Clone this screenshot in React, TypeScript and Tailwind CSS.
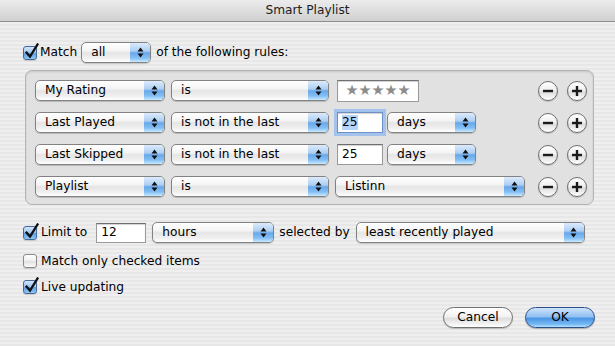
import React from "react";

const Arrows = () => (
  <svg width="7" height="11" viewBox="0 0 7 11">
    <polygon points="3.5,0.5 6.5,4.5 0.5,4.5" fill="#111" />
    <polygon points="0.5,6.5 6.5,6.5 3.5,10.5" fill="#111" />
  </svg>
);

function Popup({ label, className }: { label: string; className: string }) {
  return (
    <div
      className={`flex h-[21px] shrink-0 items-stretch overflow-hidden rounded-[5px] border border-[#828282] bg-[linear-gradient(180deg,#ffffff_0%,#f4f4f4_40%,#e5e5e5_52%,#efefef_78%,#ffffff_100%)] shadow-[0_1px_1px_rgba(0,0,0,0.18)] ${className}`}
    >
      <span className="flex flex-1 items-center truncate pl-[9px] leading-none">{label}</span>
      <span className="flex w-[20px] items-center justify-center bg-[linear-gradient(180deg,#dcebfb_0%,#aecff3_42%,#6aa7eb_52%,#82bdf3_78%,#c8eaff_100%)]">
        <Arrows />
      </span>
    </div>
  );
}

function Field({
  value,
  className,
  focused,
}: {
  value: string;
  className: string;
  focused?: boolean;
}) {
  return (
    <div
      className={`flex shrink-0 items-center border bg-white pl-[4px] shadow-[inset_0_1px_1px_rgba(0,0,0,0.18)] ${
        focused
          ? "border-[#6d92c8] ring-[3px] ring-[#a3c3ec]"
          : "border-[#9a9a9a] border-t-[#6f6f6f]"
      } ${className}`}
    >
      {focused ? <span className="bg-[#b4d4fc] leading-[15px]">{value}</span> : value}
    </div>
  );
}

function Checkbox({ checked }: { checked?: boolean }) {
  return (
    <div className="relative h-[14px] w-[14px] shrink-0">
      <div
        className={`h-[14px] w-[14px] rounded-[3px] border shadow-[0_1px_1px_rgba(0,0,0,0.15)] ${
          checked
            ? "border-[#46699c] bg-[linear-gradient(180deg,#d3e6fb_0%,#9fc6f1_45%,#5e9fe9_55%,#8ec8f5_100%)]"
            : "border-[#8a8a8a] bg-[linear-gradient(180deg,#ffffff_0%,#f1f1f1_45%,#e1e1e1_55%,#fbfbfb_100%)]"
        }`}
      />
      {checked && (
        <svg
          className="absolute -top-[3px] left-[1px]"
          width="15"
          height="16"
          viewBox="0 0 15 16"
        >
          <path
            d="M2.5 9.5 L6 13.5 L13.5 1.5"
            fill="none"
            stroke="#111"
            strokeWidth="2.3"
            strokeLinecap="square"
            strokeLinejoin="miter"
          />
        </svg>
      )}
    </div>
  );
}

function RoundButton({ plus }: { plus?: boolean }) {
  return (
    <div className="flex h-[20px] w-[20px] items-center justify-center rounded-full border border-[#6e6e6e] bg-[linear-gradient(180deg,#ffffff_0%,#f0f0f0_45%,#dcdcdc_55%,#f4f4f4_85%,#ffffff_100%)] shadow-[0_1px_1px_rgba(0,0,0,0.18)]">
      <svg width="12" height="12" viewBox="0 0 12 12">
        <path d="M1 6 H11" stroke="#1a1a1a" strokeWidth="2.4" />
        {plus && <path d="M6 1 V11" stroke="#1a1a1a" strokeWidth="2.4" />}
      </svg>
    </div>
  );
}

const PlusMinus = () => (
  <div className="ml-auto flex gap-[9px]">
    <RoundButton />
    <RoundButton plus />
  </div>
);

export default function App() {
  return (
    <div className="flex h-[346px] w-[615px] flex-col overflow-hidden font-['DejaVu_Sans',sans-serif] text-[12.2px] text-black">
      <div className="flex h-[22px] shrink-0 items-center justify-center border-b border-[#8f8f8f] bg-[linear-gradient(180deg,#ececec,#d0d0d0)] text-[#1c1c1c]">
        Smart Playlist
      </div>
      <div className="flex flex-1 flex-col bg-[repeating-linear-gradient(180deg,#efefef_0px,#efefef_2px,#e7e7e7_2px,#e7e7e7_4px)] pl-[23px] pr-[20px] pt-[20px]">
        <div className="flex h-[21px] items-center">
          <Checkbox checked />
          <span className="ml-[3px]">Match</span>
          <Popup label="all" className="ml-[4px] w-[70px]" />
          <span className="ml-[5px]">of the following rules:</span>
        </div>

        <div className="ml-[2px] mt-[7px] h-[135px] w-[569px] rounded-[7px] border border-[#b4b4b4] bg-[#e1e1e1] pl-[9px] pr-[6px] pt-[9px] shadow-[inset_0_1px_2px_rgba(0,0,0,0.12)]">
          <div className="flex flex-col gap-[11px]">
            <div className="flex h-[21px] items-center">
              <Popup label="My Rating" className="w-[130px]" />
              <Popup label="is" className="ml-[6px] w-[158px]" />
              <Field
                value=""
                className="ml-[8px] h-[22px] w-[82px] justify-center !pl-0"
              />
              <span className="-ml-[82px] w-[82px] text-center text-[14.5px] text-[#8c8c8c]">
                ★★★★★
              </span>
              <PlusMinus />
            </div>
            <div className="flex h-[21px] items-center">
              <Popup label="Last Played" className="w-[130px]" />
              <Popup label="is not in the last" className="ml-[6px] w-[158px]" />
              <Field value="25" focused className="ml-[8px] h-[21px] w-[46px]" />
              <Popup label="days" className="ml-[4px] w-[89px]" />
              <PlusMinus />
            </div>
            <div className="flex h-[21px] items-center">
              <Popup label="Last Skipped" className="w-[130px]" />
              <Popup label="is not in the last" className="ml-[6px] w-[158px]" />
              <Field value="25" className="ml-[8px] h-[21px] w-[46px]" />
              <Popup label="days" className="ml-[4px] w-[89px]" />
              <PlusMinus />
            </div>
            <div className="flex h-[21px] items-center">
              <Popup label="Playlist" className="w-[130px]" />
              <Popup label="is" className="ml-[6px] w-[158px]" />
              <Popup label="Listinn" className="ml-[6px] w-[190px]" />
              <PlusMinus />
            </div>
          </div>
        </div>

        <div className="mt-[17px] flex h-[21px] items-center">
          <Checkbox checked />
          <span className="ml-[4px]">Limit to</span>
          <Field value="12" className="ml-[9px] h-[20px] w-[50px]" />
          <Popup label="hours" className="ml-[6px] w-[122px]" />
          <span className="ml-[5px]">selected by</span>
          <Popup label="least recently played" className="ml-[6px] w-[229px]" />
        </div>
        <div className="mt-[10px] flex h-[16px] items-center">
          <Checkbox />
          <span className="ml-[4px]">Match only checked items</span>
        </div>
        <div className="mt-[10px] flex h-[16px] items-center">
          <Checkbox checked />
          <span className="ml-[4px]">Live updating</span>
        </div>

        <div className="mt-[12px] flex h-[21px] justify-end gap-[12px]">
          <button className="h-[21px] w-[70px] rounded-full border border-[#707070] bg-[linear-gradient(180deg,#ffffff_0%,#f2f2f2_45%,#dedede_55%,#f3f3f3_85%,#ffffff_100%)] leading-none shadow-[0_1px_1px_rgba(0,0,0,0.2)]">
            Cancel
          </button>
          <button className="h-[21px] w-[70px] rounded-full border border-[#2b4f8a] bg-[linear-gradient(180deg,#cfe3fa_0%,#92c0f1_45%,#4d95e6_55%,#74b8f2_85%,#b6e2ff_100%)] leading-none shadow-[0_1px_1px_rgba(0,0,0,0.25)]">
            OK
          </button>
        </div>
      </div>
    </div>
  );
}
